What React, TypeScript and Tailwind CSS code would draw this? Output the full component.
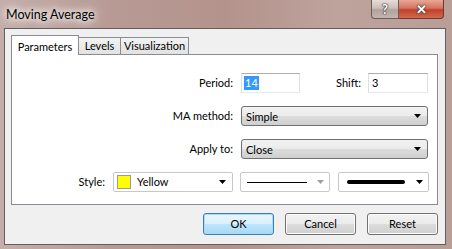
import React from "react";

const font = { fontFamily: "Lato, 'Liberation Sans', sans-serif" };

function Arrow({ grey }: { grey?: boolean }) {
  return (
    <svg width="7" height="4" viewBox="0 0 7 4" className="shrink-0">
      <polygon points="0,0 7,0 3.5,4" fill={grey ? "#a0a0a0" : "#000"} />
    </svg>
  );
}

function ComboButton({ text, w }: { text: string; w: string }) {
  return (
    <div
      className={`${w} h-[20px] flex items-center justify-between pl-[4px] pr-[6px] rounded-[3px] border border-[#707070] bg-[linear-gradient(#f2f2f2_0%,#ebebeb_50%,#dddddd_50%,#cfcfcf_100%)]`}
    >
      <span className="text-[11px] text-black leading-none">{text}</span>
      <Arrow />
    </div>
  );
}

function Btn({ text, def }: { text: string; def?: boolean }) {
  return (
    <div
      className={
        def
          ? "w-[71px] h-[22px] flex items-center justify-center rounded-[3px] border border-[#3c7fb1] shadow-[inset_0_0_0_1px_#a9dcf6] bg-[linear-gradient(#eaf6fd_0%,#d9f0fc_50%,#bee6fd_50%,#a7d9f5_100%)] text-[11px] text-black"
          : "w-[71px] h-[22px] flex items-center justify-center rounded-[3px] border border-[#707070] shadow-[inset_0_0_0_1px_#fcfcfc] bg-[linear-gradient(#f2f2f2_0%,#ebebeb_50%,#dddddd_50%,#cfcfcf_100%)] text-[11px] text-black"
      }
    >
      {text}
    </div>
  );
}

export default function App() {
  return (
    <div
      style={font}
      className="w-[452px] h-[249px] overflow-hidden flex flex-col bg-[linear-gradient(90deg,#c4aea9_0%,#b89a94_25%,#b4938c_50%,#bea39d_75%,#b99d97_100%)]"
    >
      {/* title bar */}
      <div className="h-[28px] flex items-start justify-between shrink-0">
        <div className="pl-[6px] pt-[6px] text-[12.5px] text-black [text-shadow:0_0_6px_#fff,0_0_10px_#fff,0_0_14px_#fff]">
          Moving Average
        </div>
        <div className="flex mr-[8px]">
          <div className="w-[28px] h-[19px] flex items-center justify-center rounded-bl-[4px] border border-[#6b5a57] border-t-0 bg-[linear-gradient(#e6dcda_0%,#cdbdba_45%,#b3a19d_55%,#c3b5b2_100%)] text-white font-bold text-[13px] leading-none [text-shadow:0_0_1px_#333,0_0_1px_#333,0_0_2px_#333]">
            ?
          </div>
          <div className="w-[45px] h-[19px] flex items-center justify-center rounded-br-[4px] border border-[#6b3a32] border-t-0 border-l-0 bg-[linear-gradient(#e8a796_0%,#d5735e_45%,#c0412b_55%,#d16a4c_100%)] text-white font-bold text-[13px] leading-none [text-shadow:0_0_1px_#333,0_0_1px_#333,0_0_2px_#333]">
            ✕
          </div>
        </div>
      </div>

      {/* client area */}
      <div className="ml-[4px] w-[442px] h-[217px] border border-[#5f5f5f] bg-[#f0f0f0] flex flex-col">
        {/* tabs */}
        <div className="mt-[6px] ml-[6px] h-[20px] flex items-end relative z-10">
          <div className="w-[68px] h-[20px] bg-white border border-[#898c95] border-b-0 flex items-start justify-center pt-[3px] text-[11px] text-black">
            Parameters
          </div>
          <div className="w-[42px] h-[17px] mb-[1px] border border-[#898c95] border-l-0 border-b-0 bg-[linear-gradient(#f3f3f3,#e2e2e2)] flex items-center justify-center text-[11px] text-black">
            Levels
          </div>
          <div className="w-[68px] h-[17px] mb-[1px] border border-[#898c95] border-l-0 border-b-0 bg-[linear-gradient(#f3f3f3,#e2e2e2)] flex items-center justify-center text-[11px] text-black">
            Visualization
          </div>
        </div>
        <div className="ml-[6px] -mt-[1px] w-[427px] h-[151px] bg-white border border-[#898c95] flex flex-col pt-[18px] gap-[13px] text-[11px] text-black">
          {/* Period row */}
          <div className="flex items-center h-[20px]">
            <div className="w-[221px] text-right">Period:</div>
            <div className="ml-[8px] w-[59px] h-[20px] border border-[#abadb3] border-x-[#dbdfe6] border-b-[#e3e9ef] flex items-center pl-[2px]">
              <span className="bg-[#3399ff] text-white px-[1px] leading-[14px]">14</span>
            </div>
            <div className="w-[61px] text-right">Shift:</div>
            <div className="ml-[7px] w-[60px] h-[20px] border border-[#abadb3] border-x-[#dbdfe6] border-b-[#e3e9ef] flex items-center pl-[3px]">
              3
            </div>
          </div>
          {/* MA method */}
          <div className="flex items-center h-[20px]">
            <div className="w-[221px] text-right">MA method:</div>
            <div className="ml-[8px]">
              <ComboButton text="Simple" w="w-[187px]" />
            </div>
          </div>
          {/* Apply to */}
          <div className="flex items-center h-[20px]">
            <div className="w-[221px] text-right">Apply to:</div>
            <div className="ml-[8px]">
              <ComboButton text="Close" w="w-[187px]" />
            </div>
          </div>
          {/* Style */}
          <div className="flex items-center h-[20px]">
            <div className="w-[93px] text-right">Style:</div>
            <div className="ml-[8px] w-[120px] h-[20px] rounded-[2px] border border-[#c6c8cc] bg-white flex items-center pl-[3px] pr-[6px]">
              <div className="w-[14px] h-[14px] bg-[#ffff00] border border-[#9a9a9a]" />
              <span className="ml-[6px] flex-1">Yellow</span>
              <Arrow />
            </div>
            <div className="ml-[7px] w-[90px] h-[20px] rounded-[2px] border border-[#c6c8cc] bg-white flex items-center pl-[6px] pr-[5px]">
              <div className="w-[60px] h-[1px] bg-black" />
              <div className="flex-1" />
              <Arrow grey />
            </div>
            <div className="ml-[8px] w-[91px] h-[20px] rounded-[2px] border border-[#c6c8cc] bg-white flex items-center pl-[8px] pr-[5px]">
              <div className="w-[58px] h-[4px] rounded-full bg-black" />
              <div className="flex-1" />
              <Arrow />
            </div>
          </div>
        </div>
        {/* buttons */}
        <div className="mt-[8px] ml-[198px] flex gap-[11px]">
          <Btn text="OK" def />
          <Btn text="Cancel" />
          <Btn text="Reset" />
        </div>
      </div>
    </div>
  );
}
